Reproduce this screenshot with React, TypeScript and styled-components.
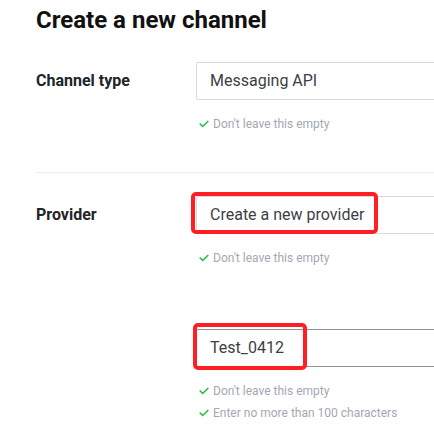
import React from "react";
import styled, { createGlobalStyle } from "styled-components";

const Global = createGlobalStyle`
  html, body { margin: 0; padding: 0; background: #ffffff; overflow: hidden; }
  body { font-family: Roboto, "Liberation Sans", Arial, sans-serif; }
`;

const Page = styled.div`
  width: 434px;
  height: 432px;
  overflow: hidden;
  padding-left: 36px;
  box-sizing: border-box;
`;

const Title = styled.h1`
  margin: 0;
  padding-top: 5px;
  font-size: 24px;
  line-height: 30px;
  font-weight: 700;
  color: #111111;
`;

const Section = styled.div<{ $top: number }>`
  display: grid;
  grid-template-columns: 160px 1fr;
  margin-top: ${(p) => p.$top}px;
`;

const Label = styled.div`
  font-size: 16px;
  font-weight: 700;
  line-height: 38px;
  color: #222428;
`;

const Field = styled.div`
  display: flex;
  flex-direction: column;
  min-width: 0;
`;

const InputWrap = styled.div`
  position: relative;
  width: 300px;
`;

const Input = styled.div<{ $dark?: boolean }>`
  height: 38px;
  box-sizing: border-box;
  border: 1px solid ${(p) => (p.$dark ? "#8c919a" : "#d6d9de")};
  border-radius: 2px;
  padding-left: 13px;
  font-size: 16px;
  line-height: 36px;
  color: #3b3f45;
  white-space: nowrap;
`;

const Highlight = styled.div<{ $l: number; $t: number; $w: number; $h: number }>`
  position: absolute;
  left: ${(p) => p.$l}px;
  top: ${(p) => p.$t}px;
  width: ${(p) => p.$w}px;
  height: ${(p) => p.$h}px;
  box-sizing: border-box;
  border: 4px solid #ff1e24;
  border-radius: 5px;
  pointer-events: none;
`;

const Hints = styled.div`
  display: flex;
  flex-direction: column;
  gap: 6px;
  margin-top: 16px;
  padding-left: 3px;
`;

const Hint = styled.div`
  display: flex;
  align-items: center;
  gap: 4px;
  font-size: 12px;
  line-height: 16px;
  color: #a3a8b2;
  white-space: nowrap;
`;

const Divider = styled.div`
  height: 1px;
  background: #ebecee;
  margin-top: 40px;
  margin-right: -40px;
`;

const Check = () => (
  <svg width="10" height="8" viewBox="0 0 10 8" fill="none">
    <polyline points="0.7,3.6 3.6,6.6 9.3,0.9" stroke="#17c13a" strokeWidth="1.4" />
  </svg>
);

const HintLine = ({ text }: { text: string }) => (
  <Hint>
    <Check />
    {text}
  </Hint>
);

export default function App() {
  return (
    <Page>
      <Global />
      <Title>Create a new channel</Title>
      <Section $top={27}>
        <Label>Channel type</Label>
        <Field>
          <InputWrap>
            <Input>Messaging API</Input>
          </InputWrap>
          <Hints>
            <HintLine text="Don't leave this empty" />
          </Hints>
        </Field>
      </Section>
      <Divider />
      <Section $top={23}>
        <Label>Provider</Label>
        <Field>
          <InputWrap>
            <Input>Create a new provider</Input>
            <Highlight $l={-5} $t={-4} $w={187} $h={42} />
          </InputWrap>
          <Hints>
            <HintLine text="Don't leave this empty" />
          </Hints>
        </Field>
      </Section>
      <Section $top={63}>
        <Label />
        <Field>
          <InputWrap>
            <Input $dark>Test_0412</Input>
            <Highlight $l={-3} $t={-6} $w={114} $h={47} />
          </InputWrap>
          <Hints>
            <HintLine text="Don't leave this empty" />
            <HintLine text="Enter no more than 100 characters" />
          </Hints>
        </Field>
      </Section>
    </Page>
  );
}
